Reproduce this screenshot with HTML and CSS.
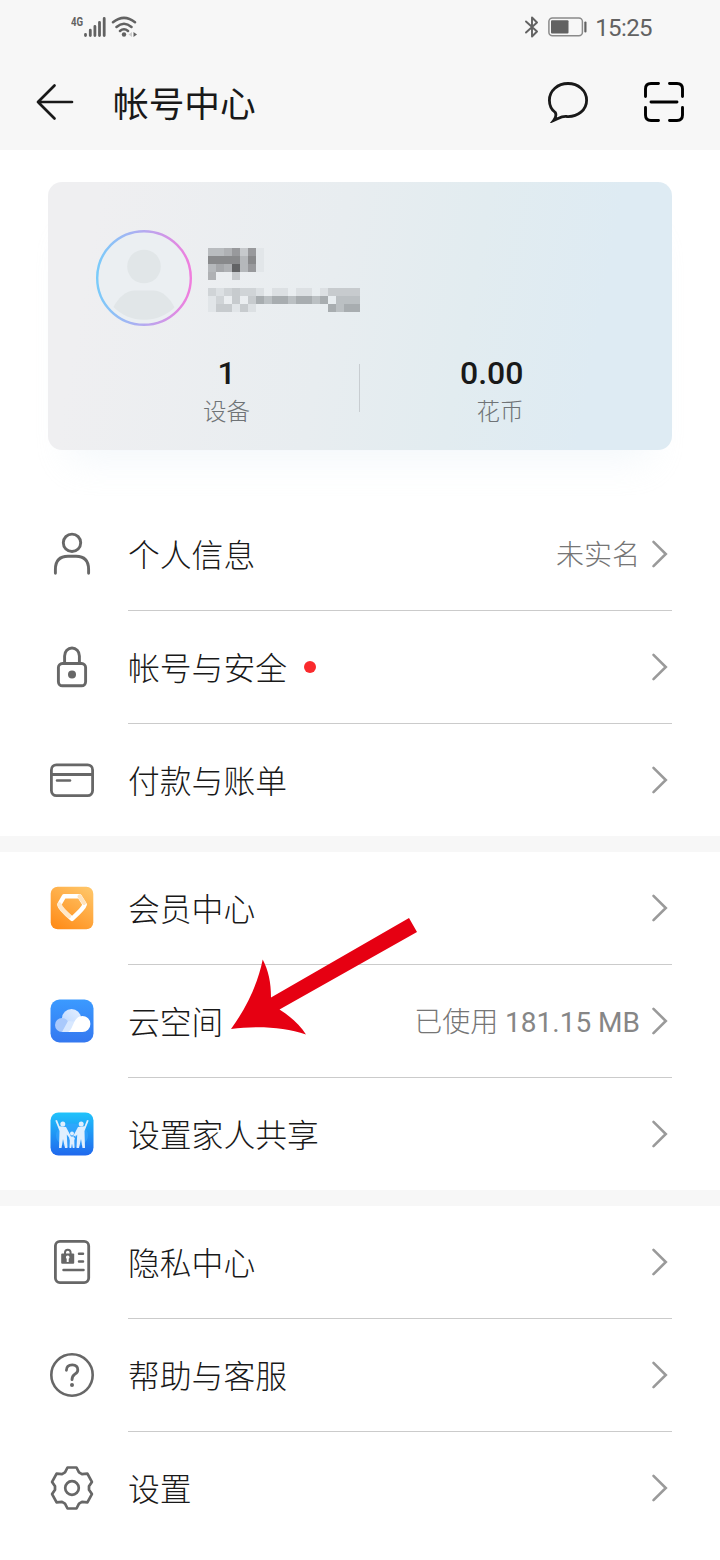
FILE: index.html
```html
<!DOCTYPE html>
<html lang="zh-CN">
<head>
<meta charset="utf-8">
<title>帐号中心</title>
<link rel="stylesheet" href="styles.css">
</head>
<body>
<svg class="defs" width="0" height="0">
  <symbol id="chevron" viewBox="0 0 24 32"><path d="M5.500 3.800 17.800 16 5.500 28.200" fill="none" stroke="#9a9a9a" stroke-width="2.600" stroke-linecap="round" stroke-linejoin="miter"/></symbol>
</svg>
<div class="screen">
  <header class="top">
    <div class="status">
      <div class="status-left">
        <span class="net">4G</span>
        <svg width="22" height="22" viewBox="0 0 22 22"><g stroke="#626262" stroke-width="2.800" stroke-linecap="round"><path d="M1.500 19.500v-1M6.300 19.500v-5.300M10.900 19.500v-9M15.500 19.500v-13.200M20.200 19.500v-17"/></g></svg>
        <svg class="wifi" width="28" height="22" viewBox="0 0 28 22"><g fill="none" stroke="#626262" stroke-width="2.500" stroke-linecap="round"><path d="M2 6.300Q13 -2.500 24 6.300M5.500 11Q13 4.500 20.500 11M9 15Q13 11.500 17 15"/></g><circle cx="13" cy="18.500" r="2.200" fill="#626262"/><path d="M21 16v5l-3.500-2.500z" fill="#ccc"/><path d="M22.500 16v5l3.500-2.500z" fill="#626262"/></svg>
      </div>
      <div class="status-right">
        <svg width="14" height="22" viewBox="0 0 14 22"><path d="M1 5.500 12 15.500 7 20.500V1.500L12 6.500 1 16.500" fill="none" stroke="#626262" stroke-width="1.900" stroke-linejoin="round" stroke-linecap="round"/></svg>
        <svg class="battery" width="39" height="20" viewBox="0 0 39 20"><rect x=".9" y="1" width="33.500" height="17.800" rx="3.500" fill="none" stroke="#8a8a8a" stroke-width="1.500"/><rect x="3" y="3.200" width="17.500" height="13.400" rx="1" fill="#626262"/><rect x="36.300" y="4.500" width="2.200" height="11" rx="1" fill="#626262"/></svg>
        <span class="time">15:25</span>
      </div>
    </div>
    <div class="nav">
      <svg width="38" height="38" viewBox="0 0 38 38"><path d="M18.500 2.500 2 19l16.500 16.500M2 19h34" fill="none" stroke="#191919" stroke-width="2.700" stroke-linecap="round" stroke-linejoin="round"/></svg>
      <h1>帐号中心</h1>
      <svg class="chat" width="42" height="42" viewBox="0 0 42 42"><path d="M6.600 39.500C9.300 36 9.300 33.500 8.300 31.500 4 28.300 2.400 24 2.400 19.200 2.400 9.500 10.800 2.500 21 2.500S39.600 9.500 39.600 19.200 31 36 20 35.500C15 34.800 12.500 37 6.600 39.500Z" fill="none" stroke="#191919" stroke-width="2.800" stroke-linejoin="miter"/></svg>
      <svg width="42" height="42" viewBox="0 0 42 42"><path d="M2.500 15.500V8q0-5.500 5.500-5.500h7.500M26.500 2.500H34q5.500 0 5.500 5.500v7.500M39.500 26.500V34q0 5.500-5.500 5.500h-7.500M15.500 39.500H8q-5.500 0-5.500-5.500v-7.500M8 21h26" fill="none" stroke="#000" stroke-width="2.900" stroke-linecap="round"/></svg>
    </div>
  </header>

  <section class="card">
    <div class="profile">
      <svg width="96" height="96" viewBox="0 0 96 96">
        <defs><linearGradient id="ring"><stop offset="0" stop-color="#7acbfa"/><stop offset=".5" stop-color="#b5aaf0"/><stop offset="1" stop-color="#f07ddd"/></linearGradient></defs>
        <circle cx="48" cy="48" r="46.800" fill="#ebeff2" stroke="url(#ring)" stroke-width="2.400"/>
        <circle cx="48" cy="36.500" r="16.800" fill="#e1e6e8"/>
        <path d="M17.500 77C22 68 30 60.500 39 60.500H57C66 60.500 74 68 78.500 77.500 71 85 60 89.800 48 89.800S25 85 17.500 77Z" fill="#e1e6e8"/>
      </svg>
      <svg class="masked" width="160" height="64" viewBox="0 0 20 8" shape-rendering="crispEdges">
        <path fill="#b9bcbf" d="M0 0h3v1H0z"/><path fill="#afb1b4" d="M2 0h1v1H2zM0 3h1v1H0zM2 2h1v1H2z"/><path fill="#98999c" d="M3 0h1v1H3zM5 0h1v1H5zM5 2h1v1H5z"/>
        <path fill="#c6c9cc" d="M4 0h1v1H4zM3 3h1v1H3z"/><path fill="#88898b" d="M0 1h4v1H0zM5 1h1v1H5z"/><path fill="#b5b8bb" d="M4 1h1v2H4zM0 2h1v1H0z"/><path fill="#a5a7aa" d="M1 2h1v1H1z"/><path fill="#626365" d="M3 2h1v1H3z"/><path fill="#e2e6e9" d="M6 0h1v3H6z"/>
        <path fill="#d0d4d7" d="M0 5h1v1H0zM2 5h1v1H2zM4 5h2v1H4zM1 6h1v1H1z"/><path fill="#dce0e3" d="M1 5h1v1H1zM6 5h1v1H6zM8 5h2v1H8zM11 5h2v1h-2zM14 5h1v1h-1zM5 7h1v1H5z"/><path fill="#e1e5e8" d="M0 6h1v2H0zM3 7h1v1H3z"/>
        <path fill="#c7cbce" d="M3 5h1v1H3zM1 7h2v1H1zM3 6h1v1H3zM5 6h1v1H5zM4 7h1v1H4zM15 5h4v1h-4z"/><path fill="#a8adb0" d="M6 6h1v1H6zM8 6h2v1H8zM11 6h2v1h-2zM14 6h1v1h-1zM15 7h1v1h-1zM17 7h2v1h-2z"/><path fill="#bbc0c3" d="M7 6h1v1H7zM10 6h1v1h-1zM13 6h1v1h-1zM16 6h3v1h-3zM16 7h1v1h-1z"/>
      </svg>
    </div>
    <div class="stats">
      <div class="stat"><b>1</b><span>设备</span></div>
      <div class="stat coins"><b>0.00</b><span>花币</span></div>
    </div>
  </section>

  <section class="group">
    <div class="row">
      <svg class="icon" viewBox="0 0 48 48"><g fill="none" stroke="#676767" stroke-width="2.900" stroke-linecap="round"><circle cx="24" cy="12.800" r="8.700"/><path d="M7.400 43.300V39.500Q7.400 26.300 20 26.300h8q12.600 0 12.600 13.200v3.800"/></g></svg>
      <div class="body"><span class="label">个人信息</span><span class="value">未实名</span><svg class="chev"><use href="#chevron"/></svg></div>
    </div>
    <div class="row">
      <svg class="icon" viewBox="0 0 48 48"><g fill="none" stroke="#676767" stroke-width="2.900"><rect x="10.400" y="20.500" width="27.200" height="22.300" rx="4"/><path d="M16.600 20.500v-7.500a7.400 8 0 0 1 14.800 0V20.500"/></g><circle cx="24" cy="31.500" r="4" fill="#676767"/></svg>
      <div class="body"><span class="label">帐号与安全<i class="dot"></i></span><svg class="chev"><use href="#chevron"/></svg></div>
    </div>
    <div class="row">
      <svg class="icon" viewBox="0 0 48 48"><g fill="none" stroke="#676767" stroke-width="2.800"><rect x="3.400" y="8.900" width="41.200" height="30.700" rx="5"/><path d="M4 18.500h40"/><path d="M9 24.500h13" stroke-linecap="round" stroke-width="2.500"/></g></svg>
      <div class="body"><span class="label">付款与账单</span><svg class="chev"><use href="#chevron"/></svg></div>
    </div>
  </section>

  <section class="group">
    <div class="row">
      <svg class="icon" viewBox="0 0 48 48">
        <defs><linearGradient id="gold" x1=".8" y1="0" x2=".2" y2="1"><stop offset="0" stop-color="#ffc466"/><stop offset="1" stop-color="#ff8d1a"/></linearGradient></defs>
        <rect x="2.700" y="2.700" width="42.600" height="42.600" rx="7" fill="url(#gold)"/>
        <path d="M16 12.300H31.500L36.700 20.500Q36 24 24 34.800 12 24.500 11.300 20.500Z" fill="none" stroke="#fff" stroke-width="4.500" stroke-linejoin="round"/><path d="M11.300 20.500Q14 26 21 32" fill="none" stroke="#ffd9a6" stroke-width="4.300" stroke-linecap="round" opacity=".6"/><path d="M31.500 12.300 36 19" stroke="#ffe3bd" stroke-width="4" stroke-linecap="round"/>
      </svg>
      <div class="body"><span class="label">会员中心</span><svg class="chev"><use href="#chevron"/></svg></div>
    </div>
    <div class="row">
      <svg class="icon" viewBox="0 0 48 48">
        <defs><linearGradient id="sky" x1="0" y1="0" x2="0" y2="1"><stop offset="0" stop-color="#3b9aff"/><stop offset="1" stop-color="#3478f0"/></linearGradient><linearGradient id="puff" x1="1" y1="0" x2="0" y2="1"><stop offset="0" stop-color="#e6f0ff"/><stop offset="1" stop-color="#b9d5ff"/></linearGradient></defs>
        <rect x="2.500" y="2.500" width="43" height="43" rx="9" fill="url(#sky)"/>
        <circle cx="23.500" cy="21.500" r="9.500" fill="url(#puff)"/><circle cx="14" cy="28" r="7" fill="#a9c9fc"/><path d="M14 35h18V25L20 24Z" fill="#d8e8ff"/><path d="M20 35C25.500 33 25 19 34.500 19a7.900 8 0 0 1 0 16Z" fill="#fff"/>
      </svg>
      <div class="body"><span class="label">云空间</span><span class="value">已使用 <span class="num">181.15 MB</span></span><svg class="chev"><use href="#chevron"/></svg></div>
    </div>
    <div class="row">
      <svg class="icon" viewBox="0 0 48 48">
        <defs><linearGradient id="family" x1="0" y1="0" x2="0" y2="1"><stop offset="0" stop-color="#20c3fb"/><stop offset="1" stop-color="#2068ed"/></linearGradient></defs>
        <rect x="2.500" y="2.500" width="43" height="43" rx="8" fill="url(#family)"/>
        <ellipse cx="24" cy="25.500" rx="16" ry="12" fill="#39a7ff" opacity=".6"/>
        <g fill="#e0effe"><circle cx="14.800" cy="14" r="2.500"/><circle cx="33.200" cy="14" r="2.500"/><circle cx="24" cy="23.500" r="2"/><path d="M7.300 10.500 9 10 11.500 16.200 18 17 23 26.500 21.500 28 18.800 24.500 19.500 38H17L15 29 13.500 38H11L11.500 21ZM40.700 10.500 39 10 36.500 16.200 30 17 25 26.500 26.500 28 29.200 24.500 28.500 38H31L33 29 34.500 38H37L36.500 21ZM20.500 25.500 22.500 26.500H25.500L27.500 25.500 26.300 30.500 26.500 38H24.800L24 33.500 23.200 38H21.500L21.800 30.500Z"/></g>
      </svg>
      <div class="body"><span class="label">设置家人共享</span><svg class="chev"><use href="#chevron"/></svg></div>
    </div>
  </section>

  <section class="group">
    <div class="row">
      <svg class="icon" viewBox="0 0 48 48"><g fill="none" stroke="#676767" stroke-width="2.800"><rect x="7.400" y="3.400" width="33.300" height="41.200" rx="4.500"/><path d="M15.500 32h20M31 15.800h4M31 23.500h4" stroke-width="2.500" stroke-linecap="round"/><path d="M17 17v-2.500a2.800 2.800 0 0 1 5.600 0V17" stroke-width="2"/></g><rect x="13.200" y="15.500" width="13" height="10.200" rx="1" fill="#676767"/><path d="M19.700 17.500a1.800 1.800 0 0 1 1 3.300V24h-2v-3.200a1.800 1.800 0 0 1 1-3.300Z" fill="#fff"/></svg>
      <div class="body"><span class="label">隐私中心</span><svg class="chev"><use href="#chevron"/></svg></div>
    </div>
    <div class="row">
      <svg class="icon" viewBox="0 0 48 48"><g fill="none" stroke="#676767" stroke-linecap="round"><circle cx="24" cy="24" r="20.700" stroke-width="2.600"/><path d="M18.400 19.300Q18.400 13.800 24.300 13.800 29.800 13.800 29.800 18.900 29.800 21.300 26.900 23.200 24 25.200 24 28.700" stroke-width="2.800"/></g><circle cx="24" cy="34" r="2" fill="#676767"/></svg>
      <div class="body"><span class="label">帮助与客服</span><svg class="chev"><use href="#chevron"/></svg></div>
    </div>
    <div class="row">
      <svg class="icon" viewBox="-24 -24 48 48"><g fill="none" stroke="#676767" stroke-width="2.700" stroke-linejoin="round"><path d="M-4.500-20.500H4.500L7-15.600 10-13.900 15.400-14.400 19.900-6.100 17-1.700V1.700L19.900 6.100 15.400 14.400 10 13.900 7 15.600 4.500 20.500H-4.500L-7 15.600-10 13.900-15.400 14.400-19.900 6.100-17 1.700V-1.700L-19.900-6.100-15.400-14.400-10-13.900-7-15.600Z"/><circle r="6.800"/></g></svg>
      <div class="body"><span class="label">设置</span><svg class="chev"><use href="#chevron"/></svg></div>
    </div>
  </section>
  <svg class="pointer" width="190" height="120" viewBox="230 916 190 120"><path d="M231 1029C247 1007 258 983 262.700 959.500 268.500 971 271 982 271 997.500L409 918 417 932 279.500 1009.500C290 1016 300 1025 306 1034.500 284 1027 257 1025.500 231 1029Z" fill="#e60012"/></svg>
</div>
</body>
</html>
```

FILE: styles.css
```css
* { box-sizing: border-box; }
body { margin: 0; background: #fff; font-family: Roboto, "Noto Sans CJK SC", sans-serif; color: #191919; }
svg { display: block; flex: none; }
.defs { position: absolute; }
.screen { position: relative; width: 720px; height: 1560px; overflow: hidden; background: #fff; }

.top { height: 150px; background: #f7f7f7; }
.status { height: 54px; padding: 0 68px 0 71px; display: flex; justify-content: space-between; color: #626262; }
.status-left, .status-right { display: flex; align-items: center; }
.net { font: 700 13px/14px Roboto, sans-serif; align-self: flex-start; margin: 15px -3px 0 0; transform: scaleX(.74); transform-origin: left; }
.wifi { margin-left: 5px; }
.battery { margin: 0 8px 0 9px; }
.time { font-size: 24px; line-height: 54px; padding-top: 2px; letter-spacing: -.6px; }

.nav { height: 96px; padding: 0 35px 0 36px; display: flex; align-items: center; }
.nav h1 { margin: 0; padding: 6px 0 0 39px; font-size: 35.700px; font-weight: 400; line-height: 52px; flex: 1; }
.nav .chat { margin-right: 54px; }

.card { height: 268px; margin: 32px 48px 48px; border-radius: 14px; background: linear-gradient(100deg, #efeff1 8%, #e8edf0 45%, #e2ecf0 66%, #deebf3 86%); padding-top: 48px; box-shadow: 0 34px 34px -22px rgba(220, 232, 242, .3); }
.profile { display: flex; padding-left: 48px; }
.masked { margin: 18px 0 0 16px; }
.stats { display: flex; height: 96px; margin-top: 25px; }
.stat { display: flex; flex-direction: column; align-items: center; width: 312px; padding-left: 45px; background: linear-gradient(#c8cdd1, #c8cdd1) 311px 13px / 1px 48px no-repeat; }
.stats .coins { width: auto; padding: 0; margin-left: 100px; align-items: flex-end; background: none; }
.stat b { font-size: 32px; font-weight: 500; line-height: 44px; }
.stat span { font-size: 23.500px; font-weight: 300; line-height: 34px; color: #6f7376; }

.group + .group { border-top: 16px solid #f7f7f7; }
.row { display: flex; align-items: flex-start; padding: 0 48px; }
.icon { width: 48px; height: 48px; margin: 32px 32px 0 0; }
.body { flex: 1; height: 113px; border-bottom: 1px solid #cbcbcb; display: flex; align-items: center; }
.row:last-child .body { height: 112px; border: 0; }
.label { display: flex; align-items: center; flex: 1; font-size: 31.800px; font-weight: 300; line-height: 46px; padding-top: 3px; }
.value { font-size: 28px; font-weight: 300; line-height: 40px; color: #757575; padding-top: 4px; }
.num { font-weight: 400; color: #868686; }
.chev { width: 24px; height: 32px; margin-left: 8px; }
.dot { width: 12px; height: 12px; border-radius: 50%; background: #fa2a2d; margin: -4px 0 0 17px; }
.pointer { position: absolute; left: 230px; top: 916px; }
```
